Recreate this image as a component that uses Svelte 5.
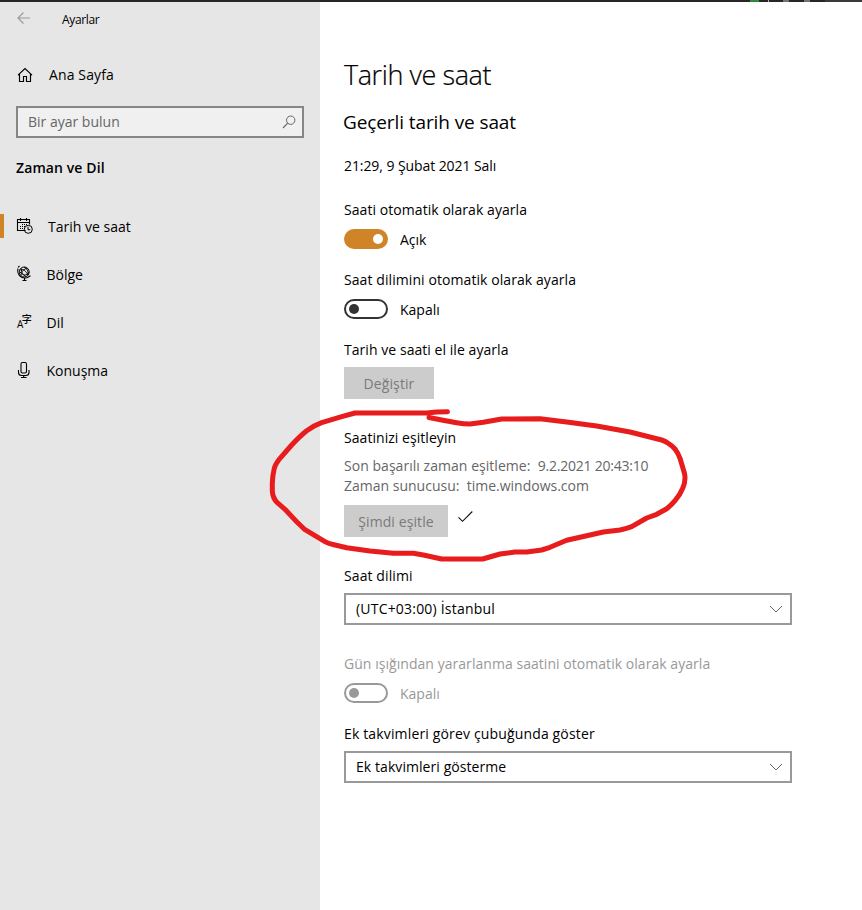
<script>
  const nav = [
    { id: 'date', label: 'Tarih ve saat', active: true },
    { id: 'region', label: 'Bölge' },
    { id: 'language', label: 'Dil' },
    { id: 'speech', label: 'Konuşma' }
  ];
</script>

{#snippet toggle(on, disabled, text)}
  <div class="toggle-row" class:disabled>
    <span class="toggle" class:on><i></i></span>
    <span class="state">{text}</span>
  </div>
{/snippet}

{#snippet select(text, cls)}
  <div class="select">
    <span class={cls}>{text}</span>
    <svg width="14" height="8" viewBox="0 0 14 8"><path d="M1 1l6 6 6-6" fill="none" stroke="#666" /></svg>
  </div>
{/snippet}

<div class="window">
  <div class="strip"><i class="green"></i><i class="tick"></i><i class="mark"></i><i class="mark two"></i><i class="rest"></i></div>
  <div class="columns">
    <aside>
      <header>
        <svg width="14" height="14" viewBox="0 0 14 14"><path d="M13 7H1M6.500 1.500L1 7l5.500 5.500" fill="none" stroke="#999" stroke-width="1.1" /></svg>
        <span>Ayarlar</span>
      </header>
      <div class="home">
        <svg width="16" height="16" viewBox="0 0 16 16"><path d="M1 8.200L8 1.500l7 6.700M2.500 7v7.500h4v-5h3v5h4V7" fill="none" stroke="#000" stroke-width="1.15" /></svg>
        <span>Ana Sayfa</span>
      </div>
      <div class="search">
        <span>Bir ayar bulun</span>
        <svg width="14" height="14" viewBox="0 0 14 14"><circle cx="8.700" cy="5.200" r="4.200" fill="none" stroke="#666" /><path d="M5.700 8.200L1 13" stroke="#666" stroke-width="1.1" /></svg>
      </div>
      <h3>Zaman ve Dil</h3>
      <nav>
        {#each nav as item}
          <div class="item {item.id}" class:active={item.active}>
            <svg width="16" height="18" viewBox="0 0 16 18">
              {#if item.id === 'date'}
                <g fill="none" stroke="#000">
                  <path d="M8.500 13.500h-8v-11h12v5M.5 5.500h12M3.500 1v3M9.500 1v3" stroke-width="1.1" />
                  <path d="M5 7.500h6M3 9.500h5M3 11.500h4" stroke-dasharray="1 1" />
                  <circle cx="11.300" cy="12.300" r="4" /><path d="M11 9.700v3h2.300" />
                </g>
              {:else if item.id === 'region'}
                <g fill="none" stroke="#000">
                  <circle cx="7.200" cy="7" r="5" />
                  <path d="M2.700 5.300c3-2 6.300.4 8.300 5M4 10.500c0-4 3-7 6.500-7M3 7c3.700 4 6.500 4 9 0M4.500 3.500C4 7 6 10.500 9.500 11.500M7 2c3 1.500 4.500 4 4 7.500" stroke-width=".9" />
                  <path d="M2.500 1L1 2.300M1 3.500C-.5 9 4 14.300 10 12.700l3.500-2M7.500 13.500v2M5.500 15.500h4" stroke-width="1.1" />
                </g>
              {:else if item.id === 'language'}
                <text x="0" y="15" class="latin">A</text>
                <text x="4.700" y="10" class="han">字</text>
              {:else}
                <g fill="none" stroke="#000" stroke-width="1.1">
                  <rect x="4" y="1.500" width="5.500" height="10.500" rx="1.500" />
                  <path d="M1.500 9v2.500q0 3 3 3h4.500q3 0 3-3V9M6.700 14.500v2M4 16.500h5.500" />
                </g>
              {/if}
            </svg>
            <span>{item.label}</span>
          </div>
        {/each}
      </nav>
    </aside>

    <main>
      <h1>Tarih ve saat</h1>
      <h2>Geçerli tarih ve saat</h2>
      <p class="now">21:29, 9 Şubat 2021 Salı</p>

      <section>
        <p class="auto">Saati otomatik olarak ayarla</p>
        {@render toggle(true, false, 'Açık')}
      </section>
      <section>
        <p class="zone-auto">Saat dilimini otomatik olarak ayarla</p>
        {@render toggle(false, false, 'Kapalı')}
      </section>
      <section class="manual">
        <p class="by-hand">Tarih ve saati el ile ayarla</p>
        <button disabled class="change">Değiştir</button>
      </section>
      <section class="sync">
        <p class="sync-title">Saatinizi eşitleyin</p>
        <div class="info">
          <p class="last">Son başarılı zaman eşitleme:&nbsp; <span>9.2.2021 20:43:10</span></p>
          <p class="server">Zaman sunucusu:&nbsp; time.windows.com</p>
        </div>
        <div class="sync-row">
          <button disabled class="sync-now">Şimdi eşitle</button>
          <svg width="16" height="14" viewBox="0 0 16 14"><path d="M1.500 7.300l4 4L15.300 1.500" fill="none" stroke="#111" stroke-width="1.1" /></svg>
        </div>
      </section>
      <section class="zone">
        <p class="zone-title">Saat dilimi</p>
        {@render select('(UTC+03:00) İstanbul', 'utc')}
      </section>
      <section>
        <p class="daylight">Gün ışığından yararlanma saatini otomatik olarak ayarla</p>
        {@render toggle(false, true, 'Kapalı')}
      </section>
      <section>
        <p class="calendars">Ek takvimleri görev çubuğunda göster</p>
        {@render select('Ek takvimleri gösterme', 'none')}
      </section>
    </main>
  </div>

  <svg class="ink" width="862" height="910" viewBox="0 0 862 910">
    <path d="M447.500 411.700L436.700 412L426.700 413H355L341.700 416.700L321.700 422.700Q314 425.500 306.700 430.700Q300 436 291.700 445L280 458.300Q275.500 464 274.300 468.300Q272.500 476 272.300 483.300V491Q272.700 498 277.300 502.700L285 509.300L296.700 521.700L305 529.700L315 535.700L325 541.700Q328 543.500 333 544.500L346.700 547.700L370 551L393.300 553.300H413.300L423.300 555L441.700 559H482.700L500 554L515 552H526.700L541.700 550L550 547.300L566.700 540.300L586.700 535.700L603.300 532L620 530Q627 528.500 631.700 526.700L646.700 518L656.700 514.300L666.700 508.700Q671 505.500 675 500.700Q680 495 682.700 488.300Q685 483 685 478.300Q685 475 684.300 472.700L680 458.300Q678 453 675 449Q672 445.500 668.300 443.300Q665 441 661.700 440L630 432L596.700 426L566.700 422L540 418.700L501.700 419L483.300 422.300L470 424Q464 424 456.700 422.700L441.700 420L429 417.500" />
  </svg>
</div>

<style>
  :global(body) { margin: 0; background: #fff; }
  .window { position: relative; width: 862px; height: 910px; overflow: hidden; font: 14px/20px "Open Sans", "Noto Sans", sans-serif; color: #000; background: #fff; }
  .strip { height: 2px; background: #2a2627; display: flex; }
  .strip i { height: 2px; }
  .green { width: 9px; margin-left: 750px; background: #30893c; }
  .tick { width: 1px; margin-left: 9px; background: #a9b6a9; }
  .mark { width: 6px; margin-left: 14px; background: #777374; }
  .mark.two { margin-left: 15px; }
  .rest { flex: 1; margin-left: 15px; background: #3c393b; }
  .columns { display: flex; height: 908px; }
  aside { width: 320px; background: #e6e6e6; flex: none; }
  header { display: flex; height: 32px; padding-left: 17px; }
  header svg { margin-top: 9px; margin-right: 31px; }
  header span { font-size: 12px; line-height: 35px; letter-spacing: -.35px; }
  .home { display: flex; align-items: center; height: 20px; margin: 31px 0 0 17px; }
  .home span { margin-left: 16px; letter-spacing: .12px; }
  .search { display: flex; align-items: center; justify-content: space-between; box-sizing: border-box; width: 288px; height: 32px; margin: 21px 0 0 16px; padding: 0 6px 0 10px; border: 2px solid #868686; background: #f0f0f0; color: #666; }
  h1, h2, h3, p { margin: 0; font-weight: 400; white-space: nowrap; }
  h3 { font-size: 14px; font-weight: 600; line-height: 20px; letter-spacing: .1px; margin: 20px 0 0 16px; }
  nav { margin-top: 36px; }
  .item { display: flex; align-items: center; height: 24px; padding-left: 17px; margin-bottom: 24px; }
  .item svg { overflow: visible; }
  .item span { margin-left: 13.5px; line-height: 22px; padding-top: 2px; }
  .item.active { border-left: 4px solid #d08428; padding-left: 13px; }
  .item.active span { margin-left: 15px; }
  .latin { font: 10px "Open Sans", sans-serif; }
  .han { font: 500 10px "Noto Sans CJK JP", sans-serif; }
  main { padding-left: 24px; width: 448px; }
  h1 { font-size: 27px; font-weight: 300; line-height: 38px; letter-spacing: -.42px; margin-top: 54px; -webkit-text-stroke: .2px #000; }
  h2 { font-size: 19px; line-height: 28px; letter-spacing: -.1px; margin: 14px 0 0 -1px; }
  .now { margin-top: 20px; margin-bottom: 24px; letter-spacing: -.08px; }
  section { height: 70px; }
  .auto { letter-spacing: .06px; }
  .zone-auto { letter-spacing: .08px; }
  .by-hand, .sync-title { letter-spacing: .05px; }
  .last { letter-spacing: .04px; }
  .last span { letter-spacing: -.23px; }
  .zone-title { letter-spacing: .1px; }
  .utc { letter-spacing: .2px; }
  .calendars { letter-spacing: .15px; }
  .none { letter-spacing: .07px; }
  .toggle-row { display: flex; align-items: center; height: 20px; margin-top: 9px; }
  .toggle { box-sizing: border-box; width: 44px; height: 20px; border: 2px solid #333; border-radius: 10px; padding: 3px; display: flex; }
  .toggle i { width: 10px; height: 10px; border-radius: 50%; background: #333; }
  .toggle.on { background: #d08428; border-color: #d08428; justify-content: flex-end; }
  .toggle.on i { background: #fff; }
  .state { margin-left: 12px; line-height: 20px; padding-top: 2px; }
  .disabled { color: #999; }
  .disabled .toggle { border-color: #999; }
  .disabled i { background: #999; }
  button { display: block; height: 32px; border: 0; padding: 2px 0 0; background: #ccc; color: #7a7a7a; font: inherit; letter-spacing: .1px; }
  .change { width: 90px; margin-top: 7px; }
  .manual { height: 88px; }
  .sync { height: 138px; }
  .info { margin-top: 8px; color: #666; }
  .sync-row { display: flex; margin-top: 9px; }
  .sync-now { width: 104px; }
  .sync-row svg { margin: 5px 0 0 9px; }
  .zone { height: 88px; }
  .select { box-sizing: border-box; height: 32px; margin-top: 7px; border: 2px solid #999; padding: 0 7px 0 10px; display: flex; align-items: center; justify-content: space-between; }
  .daylight { color: #999; letter-spacing: .045px; }
  .ink { position: absolute; left: 0; top: 0; pointer-events: none; }
  .ink path { fill: none; stroke: #e81c1c; stroke-width: 5; stroke-linecap: round; stroke-linejoin: round; }
</style>
